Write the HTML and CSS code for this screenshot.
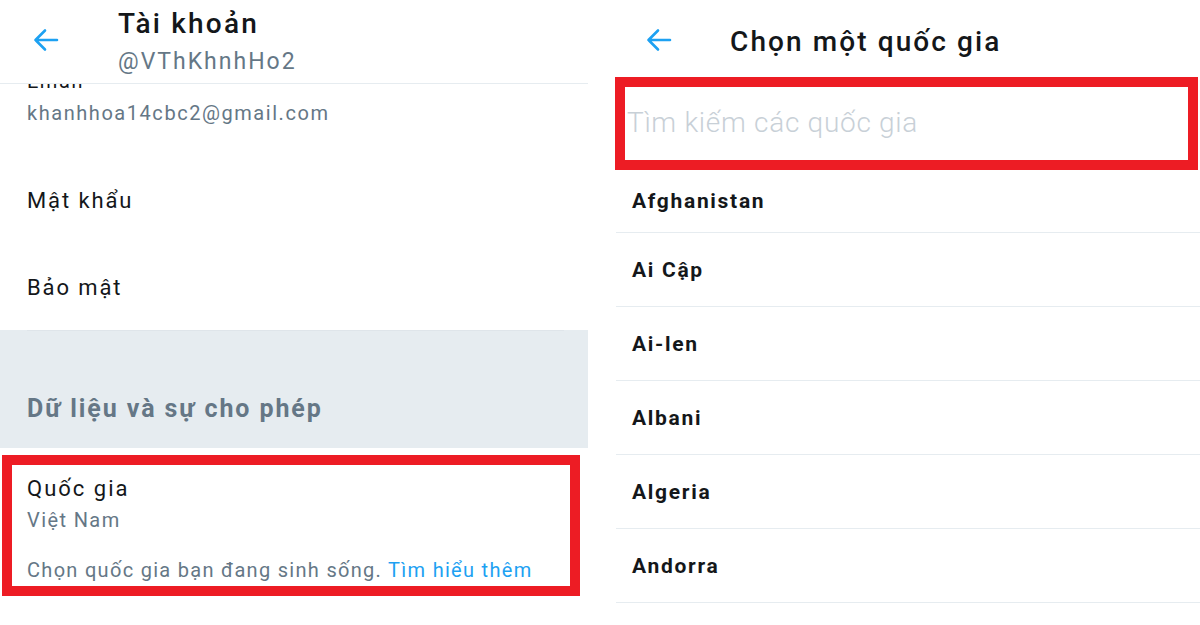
FILE: index.html
```html
<!DOCTYPE html>
<html lang="vi">
<head>
  <meta charset="UTF-8">
  <title>Tài khoản — Chọn một quốc gia</title>
  <link rel="stylesheet" href="styles.css">
</head>
<body>
  <div class="screens">
    <!-- màn hình tài khoản -->
    <section class="panel account">
      <header class="topbar">
        <span class="back">
          <svg width="28" height="28" viewBox="0 0 28 28"><path d="M25 14H3.5M13 4.5L3.5 14l9.5 9.5" fill="none" stroke="#1da1f2" stroke-width="2.6" stroke-linecap="round" stroke-linejoin="round"/></svg>
        </span>
        <div class="titles">
          <h1>Tài khoản</h1>
          <p class="handle">@VThKhnhHo2</p>
        </div>
      </header>

      <div class="row email-row">
        <div class="clip"><span>Email</span></div>
        <div class="sub">khanhhoa14cbc2@gmail.com</div>
      </div>
      <div class="row item">Mật khẩu</div>
      <div class="row item last">Bảo mật</div>

      <div class="section-head">
        <h2>Dữ liệu và sự cho phép</h2>
      </div>

      <div class="mark country">
        <div class="label">Quốc gia</div>
        <div class="sub">Việt Nam</div>
        <div class="note">Chọn quốc gia bạn đang sinh sống. <a href="#">Tìm hiểu thêm</a></div>
      </div>
    </section>

    <!-- màn hình chọn quốc gia -->
    <section class="panel picker">
      <header class="topbar picker-bar">
        <span class="back">
          <svg width="28" height="28" viewBox="0 0 28 28"><path d="M25 14H3.5M13 4.5L3.5 14l9.5 9.5" fill="none" stroke="#1da1f2" stroke-width="2.6" stroke-linecap="round" stroke-linejoin="round"/></svg>
        </span>
        <h1>Chọn một quốc gia</h1>
      </header>

      <div class="mark search">
        <input type="text" placeholder="Tìm kiếm các quốc gia">
      </div>

      <ul class="countries">
        <li class="first">Afghanistan</li>
        <li>Ai Cập</li>
        <li>Ai-len</li>
        <li>Albani</li>
        <li>Algeria</li>
        <li>Andorra</li>
      </ul>
    </section>
  </div>
</body>
</html>
```

FILE: styles.css
```css
body {
  margin: 0;
  background-color: #ffffff;
  font-family: Roboto, 'Noto Sans', sans-serif;
  color: #14171a;
}

.screens {
  display: flex;
  gap: 12px;
  width: 1200px;
  height: 625px;
  overflow: hidden;
}

.panel {
  display: flex;
  flex-direction: column;
}

.account {
  width: 588px;
}

.picker {
  width: 600px;
}

.topbar {
  display: flex;
  align-items: flex-start;
  height: 83px;
  border-bottom: 1px solid #e6ecf0;
}

.back {
  display: flex;
  width: 28px;
  height: 28px;
  margin: 26px 0 0 32px;
}

.titles {
  margin-left: 58px;
}

h1 {
  margin: 0;
  font-size: 28px;
  font-weight: 500;
  line-height: 36px;
  margin-top: 6px;
  letter-spacing: 2.2px;
}

.handle {
  margin: 2px 0 0;
  font-size: 23px;
  line-height: 36px;
  color: #657786;
  letter-spacing: 2px;
}

.row {
  padding-left: 27px;
}

.email-row {
  height: 72px;
}

.clip {
  display: flex;
  align-items: flex-end;
  height: 8px;
  overflow: hidden;
  font-size: 20px;
  line-height: 24px;
  letter-spacing: 1.5px;
}

.clip span {
  flex-shrink: 0;
  margin-bottom: -1px;
}

.sub {
  font-size: 20px;
  line-height: 24px;
  color: #657786;
}

.email-row .sub {
  margin-top: 9px;
  letter-spacing: 1.55px;
}

.item {
  display: flex;
  align-items: center;
  height: 88px;
  font-size: 22px;
  letter-spacing: 1.9px;
}

.item.last {
  height: 86px;
}

.section-head {
  background-color: #e6ecf0;
  height: 118px;
  box-sizing: border-box;
  padding: 64px 0 0 27px;
  position: relative;
}

.section-head::before {
  content: "";
  position: absolute;
  top: 0;
  left: 27px;
  right: 24px;
  height: 1px;
  background-color: #dfe5ea;
}

h2 {
  margin: 0;
  font-size: 25px;
  font-weight: 700;
  line-height: 30px;
  color: #657786;
  letter-spacing: 1.9px;
}

.mark {
  border: 10px solid #ed1c24;
  box-sizing: border-box;
}

.country {
  width: 578px;
  height: 141px;
  margin: 7px 0 0 2px;
  padding: 11px 0 0 15px;
}

.label {
  font-size: 22px;
  line-height: 26px;
  letter-spacing: 2px;
}

.country .sub {
  margin-top: 7px;
  line-height: 22px;
  letter-spacing: 1.4px;
}

.note {
  margin-top: 28px;
  font-size: 20px;
  line-height: 22px;
  color: #657786;
  letter-spacing: 1.3px;
}

.note a {
  color: #1da1f2;
  text-decoration: none;
}

.picker-bar {
  height: 77px;
  border-bottom: none;
}

.picker-bar .back {
  margin-left: 45px;
}

.picker-bar h1 {
  margin-left: 57px;
  margin-top: 24px;
  font-size: 28px;
  letter-spacing: 2.1px;
}

.search {
  width: 583px;
  height: 93px;
  margin-left: 15px;
  display: flex;
  align-items: center;
}

.search input {
  width: 100%;
  border: none;
  outline: none;
  padding: 0 0 0 2px;
  margin-top: -2px;
  font-family: Roboto, sans-serif;
  font-size: 28px;
  font-weight: 300;
  letter-spacing: 0.7px;
  background: transparent;
}

.search input::placeholder {
  color: #c8d0d7;
}

.countries {
  list-style: none;
  margin: 0 0 0 16px;
  padding: 0;
}

.countries li {
  display: flex;
  align-items: center;
  height: 73px;
  padding-left: 16px;
  border-bottom: 1px solid #e6ecf0;
  font-size: 21px;
  font-weight: 700;
  color: #14171a;
  letter-spacing: 1.7px;
}

.countries li.first {
  height: 62px;
  padding-top: 0;
}
```
